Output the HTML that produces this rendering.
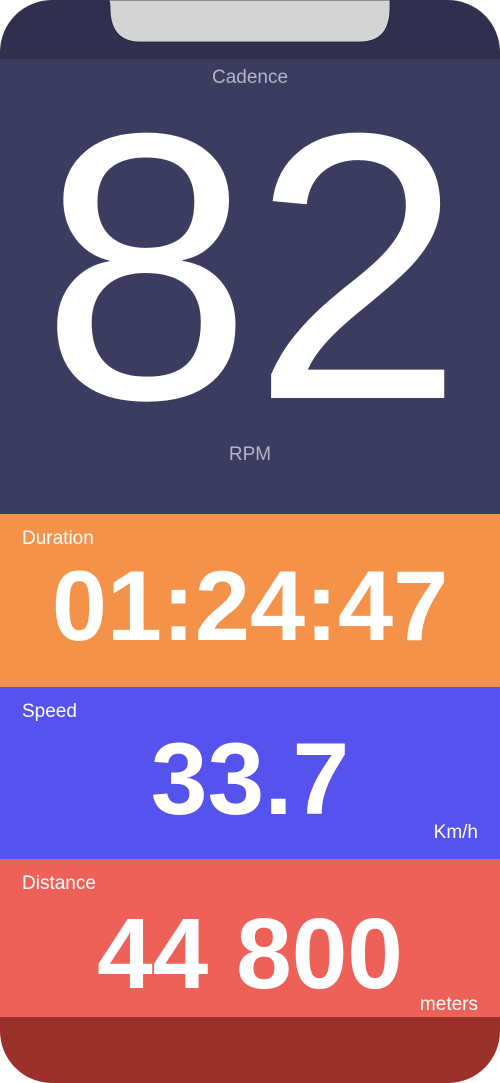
<!DOCTYPE html>
<html><head><meta charset="utf-8"><style>
html,body{margin:0;padding:0;background:#fff;width:500px;height:1083px;overflow:hidden}
svg{display:block}
text{font-family:"Liberation Sans",Arial,sans-serif}
</style></head><body>
<svg width="500" height="1083" viewBox="0 0 500 1083">
<defs><clipPath id="c"><rect x="0" y="0" width="500" height="1083" rx="52" ry="52"/></clipPath></defs>
<g clip-path="url(#c)">
<rect x="0" y="0" width="500" height="60" fill="#30304e"/>
<rect x="0" y="59" width="500" height="456" fill="#3c3c60"/>
<rect x="0" y="514" width="500" height="174" fill="#f4924a"/>
<rect x="0" y="687" width="500" height="173" fill="#5552ed"/>
<rect x="0" y="859" width="500" height="159" fill="#ee6158"/>
<rect x="0" y="1017" width="500" height="66" fill="#9c302b"/>
</g>
<path d="M108 0 H390 Q390 0 390 8 Q390 42 360 42 H140 Q110 42 110 8 Q110 0 108 0Z" fill="#d4d4d4" stroke="#1e1e40" stroke-width="0.8"/>
<text x="250" y="83" font-size="19" fill="#b4b4c8" text-anchor="middle">Cadence</text>
<text x="252" y="398" font-size="380" fill="#fff" text-anchor="middle">82</text>
<text x="250" y="460" font-size="19" fill="#b4b4c8" text-anchor="middle">RPM</text>
<text x="22" y="544" font-size="19" fill="#fff">Duration</text>
<text x="250" y="640" font-size="99" font-weight="bold" fill="#fff" text-anchor="middle">01:24:47</text>
<text x="22" y="717" font-size="19" fill="#fff">Speed</text>
<text x="250" y="814" font-size="102" font-weight="bold" fill="#fff" text-anchor="middle">33.7</text>
<text x="478" y="838" font-size="19" fill="#fff" text-anchor="end">Km/h</text>
<text x="22" y="889" font-size="19" fill="#fff">Distance</text>
<text x="250" y="988" font-size="100" font-weight="bold" fill="#fff" text-anchor="middle">44 800</text>
<text x="478" y="1010" font-size="19" fill="#fff" text-anchor="end">meters</text>
</svg>
</body></html>
